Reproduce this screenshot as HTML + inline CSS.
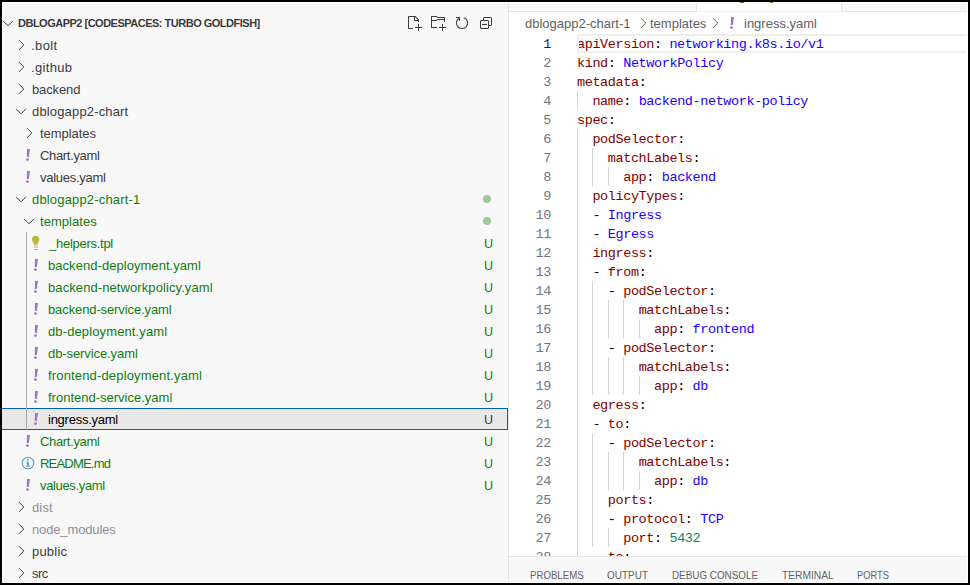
<!DOCTYPE html>
<html><head><meta charset="utf-8"><style>
html,body{margin:0;padding:0;}
body{width:970px;height:585px;overflow:hidden;background:#000;position:relative;font-family:"Liberation Sans",sans-serif;}
.a{position:absolute;}
.ic{position:absolute;overflow:visible;}
#win{position:absolute;left:2px;top:2px;width:966px;height:581px;background:#fff;}
#sb{position:absolute;left:2px;top:3px;width:506px;height:579px;background:#f8f8f8;overflow:hidden;}
.row{position:absolute;left:0;height:22px;width:506px;}
.t{position:absolute;font-size:13px;line-height:22px;white-space:pre;top:0;}
.sel{left:0;width:506px;background:#e8e8e8;border-top:1px solid #005fb8;border-bottom:1px solid #005fb8;border-right:1px solid #005fb8;box-sizing:border-box;}
.badge{position:absolute;left:482px;font-size:12.5px;line-height:22px;top:0;}
.dot{position:absolute;left:481px;top:7px;width:8px;height:8px;border-radius:50%;background:#9fc79c;}
.guide{position:absolute;width:1px;background:#a9a9a9;}
#ed{position:absolute;left:509px;top:3px;width:458px;height:579px;background:#fff;overflow:hidden;}
.ln{position:absolute;left:0;width:42px;text-align:right;font-family:"Liberation Mono",monospace;font-size:13.5px;line-height:19px;letter-spacing:-0.4px;color:#6e7681;white-space:pre;}
.cl{position:absolute;left:68px;font-family:"Liberation Mono",monospace;font-size:13.5px;line-height:19px;letter-spacing:-0.4px;color:#000;white-space:pre;}
.k{color:#800000}.v{color:#2200ff}.n{color:#098658}
.ig{position:absolute;width:1px;height:19px;background:#d3d3d3;}
</style></head><body>
<div id="win"></div>

<div id="sb"><div class="a" style="left:0;top:0;width:1px;height:579px;background:#fff"></div>
<svg class="ic" style="left:-2px;top:12px" width="16" height="16" viewBox="0 0 16 16"><path d="M3.1 5.9L8 10.8L12.9 5.9" fill="none" stroke="#3b3b3b" stroke-width="1"/></svg>
<div class="a" style="left:16px;top:9px;font-weight:bold;font-size:11px;line-height:22px;letter-spacing:-0.5px;color:#3b3b3b;white-space:pre">DBLOGAPP2 [CODESPACES: TURBO GOLDFISH]</div>
<div class="row" style="top:31px"><svg class="ic" style="left:11px;top:3px" width="16" height="16" viewBox="0 0 16 16"><path d="M5.9 3.1L10.8 8L5.9 12.9" fill="none" stroke="#3b3b3b" stroke-width="1"/></svg><div class="t" style="left:29px;color:#3b3b3b;top:1px;letter-spacing:0.40px">.bolt</div></div>
<div class="row" style="top:53px"><svg class="ic" style="left:11px;top:3px" width="16" height="16" viewBox="0 0 16 16"><path d="M5.9 3.1L10.8 8L5.9 12.9" fill="none" stroke="#3b3b3b" stroke-width="1"/></svg><div class="t" style="left:29px;color:#3b3b3b;top:1px;letter-spacing:0.33px">.github</div></div>
<div class="row" style="top:75px"><svg class="ic" style="left:11px;top:3px" width="16" height="16" viewBox="0 0 16 16"><path d="M5.9 3.1L10.8 8L5.9 12.9" fill="none" stroke="#3b3b3b" stroke-width="1"/></svg><div class="t" style="left:30px;color:#3b3b3b;top:1px;letter-spacing:-0.13px">backend</div></div>
<div class="row" style="top:97px"><svg class="ic" style="left:11px;top:3px" width="16" height="16" viewBox="0 0 16 16"><path d="M3.1 5.9L8 10.8L12.9 5.9" fill="none" stroke="#3b3b3b" stroke-width="1"/></svg><div class="t" style="left:30px;color:#3b3b3b;top:1px;letter-spacing:0.16px">dblogapp2-chart</div></div>
<div class="row" style="top:119px"><svg class="ic" style="left:19px;top:3px" width="16" height="16" viewBox="0 0 16 16"><path d="M5.9 3.1L10.8 8L5.9 12.9" fill="none" stroke="#3b3b3b" stroke-width="1"/></svg><div class="t" style="left:38px;color:#3b3b3b;top:1px;letter-spacing:-0.05px">templates</div></div>
<div class="row" style="top:141px"><svg class="ic" style="left:20px;top:3px" width="16" height="16" viewBox="0 0 16 16"><path d="M5 2H8L6.8 10H4.8Z" fill="#a074c4"/><circle cx="5.5" cy="12.6" r="1.45" fill="#a074c4"/></svg><div class="t" style="left:38px;color:#3b3b3b;top:1px;letter-spacing:-0.33px">Chart.yaml</div></div>
<div class="row" style="top:163px"><svg class="ic" style="left:20px;top:3px" width="16" height="16" viewBox="0 0 16 16"><path d="M5 2H8L6.8 10H4.8Z" fill="#a074c4"/><circle cx="5.5" cy="12.6" r="1.45" fill="#a074c4"/></svg><div class="t" style="left:38px;color:#3b3b3b;top:1px;letter-spacing:-0.28px">values.yaml</div></div>
<div class="row" style="top:185px"><svg class="ic" style="left:11px;top:3px" width="16" height="16" viewBox="0 0 16 16"><path d="M3.1 5.9L8 10.8L12.9 5.9" fill="none" stroke="#3b3b3b" stroke-width="1"/></svg><div class="t" style="left:30px;color:#107a10;top:1px;letter-spacing:0.17px">dblogapp2-chart-1</div><div class="dot" style="top:7px"></div></div>
<div class="row" style="top:207px"><svg class="ic" style="left:19px;top:3px" width="16" height="16" viewBox="0 0 16 16"><path d="M3.1 5.9L8 10.8L12.9 5.9" fill="none" stroke="#3b3b3b" stroke-width="1"/></svg><div class="t" style="left:38px;color:#107a10;top:1px;letter-spacing:0.05px">templates</div><div class="dot" style="top:7px"></div></div>
<div class="row" style="top:229px"><svg class="ic" style="left:28px;top:2px" width="12" height="18" viewBox="0 0 12 18"><path d="M5.6 1.8C3.5 1.8 2 3.3 2 5.3C2 7.2 3.3 8.3 3.6 9.5L3.8 10.8H7.6L7.8 9.5C8.1 8.3 9.3 7.2 9.3 5.3C9.3 3.3 7.7 1.8 5.6 1.8Z" fill="#b5b53f"/><rect x="4" y="11" width="3.7" height="1.8" fill="#deddb5"/><rect x="4" y="12.8" width="3.7" height="0.9" fill="#c2c277"/><rect x="4" y="15" width="3.7" height="1" fill="#b5b53f"/></svg><div class="t" style="left:47px;color:#107a10;top:1px;letter-spacing:-0.27px">_helpers.tpl</div><div class="badge" style="color:#107a10;top:1px">U</div></div>
<div class="row" style="top:251px"><svg class="ic" style="left:28px;top:3px" width="16" height="16" viewBox="0 0 16 16"><path d="M5 2H8L6.8 10H4.8Z" fill="#a074c4"/><circle cx="5.5" cy="12.6" r="1.45" fill="#a074c4"/></svg><div class="t" style="left:46px;color:#107a10;top:1px;letter-spacing:0.05px">backend-deployment.yaml</div><div class="badge" style="color:#107a10;top:1px">U</div></div>
<div class="row" style="top:273px"><svg class="ic" style="left:28px;top:3px" width="16" height="16" viewBox="0 0 16 16"><path d="M5 2H8L6.8 10H4.8Z" fill="#a074c4"/><circle cx="5.5" cy="12.6" r="1.45" fill="#a074c4"/></svg><div class="t" style="left:46px;color:#107a10;top:1px;letter-spacing:0.09px">backend-networkpolicy.yaml</div><div class="badge" style="color:#107a10;top:1px">U</div></div>
<div class="row" style="top:295px"><svg class="ic" style="left:28px;top:3px" width="16" height="16" viewBox="0 0 16 16"><path d="M5 2H8L6.8 10H4.8Z" fill="#a074c4"/><circle cx="5.5" cy="12.6" r="1.45" fill="#a074c4"/></svg><div class="t" style="left:46px;color:#107a10;top:1px;letter-spacing:-0.11px">backend-service.yaml</div><div class="badge" style="color:#107a10;top:1px">U</div></div>
<div class="row" style="top:317px"><svg class="ic" style="left:28px;top:3px" width="16" height="16" viewBox="0 0 16 16"><path d="M5 2H8L6.8 10H4.8Z" fill="#a074c4"/><circle cx="5.5" cy="12.6" r="1.45" fill="#a074c4"/></svg><div class="t" style="left:46px;color:#107a10;top:1px;letter-spacing:0.12px">db-deployment.yaml</div><div class="badge" style="color:#107a10;top:1px">U</div></div>
<div class="row" style="top:339px"><svg class="ic" style="left:28px;top:3px" width="16" height="16" viewBox="0 0 16 16"><path d="M5 2H8L6.8 10H4.8Z" fill="#a074c4"/><circle cx="5.5" cy="12.6" r="1.45" fill="#a074c4"/></svg><div class="t" style="left:46px;color:#107a10;top:1px;letter-spacing:-0.09px">db-service.yaml</div><div class="badge" style="color:#107a10;top:1px">U</div></div>
<div class="row" style="top:361px"><svg class="ic" style="left:28px;top:3px" width="16" height="16" viewBox="0 0 16 16"><path d="M5 2H8L6.8 10H4.8Z" fill="#a074c4"/><circle cx="5.5" cy="12.6" r="1.45" fill="#a074c4"/></svg><div class="t" style="left:46px;color:#107a10;top:1px;letter-spacing:0.16px">frontend-deployment.yaml</div><div class="badge" style="color:#107a10;top:1px">U</div></div>
<div class="row" style="top:383px"><svg class="ic" style="left:28px;top:3px" width="16" height="16" viewBox="0 0 16 16"><path d="M5 2H8L6.8 10H4.8Z" fill="#a074c4"/><circle cx="5.5" cy="12.6" r="1.45" fill="#a074c4"/></svg><div class="t" style="left:46px;color:#107a10;top:1px;letter-spacing:0.00px">frontend-service.yaml</div><div class="badge" style="color:#107a10;top:1px">U</div></div>
<div class="a sel" style="top:405px;height:22px"></div><div class="row" style="top:405px"><svg class="ic" style="left:28px;top:3px" width="16" height="16" viewBox="0 0 16 16"><path d="M5 2H8L6.8 10H4.8Z" fill="#a074c4"/><circle cx="5.5" cy="12.6" r="1.45" fill="#a074c4"/></svg><div class="t" style="left:46px;color:#000000;top:1px;letter-spacing:-0.25px">ingress.yaml</div><div class="badge" style="color:#3b3b3b;top:1px">U</div></div>
<div class="row" style="top:427px"><svg class="ic" style="left:20px;top:3px" width="16" height="16" viewBox="0 0 16 16"><path d="M5 2H8L6.8 10H4.8Z" fill="#a074c4"/><circle cx="5.5" cy="12.6" r="1.45" fill="#a074c4"/></svg><div class="t" style="left:38px;color:#107a10;top:1px;letter-spacing:-0.33px">Chart.yaml</div><div class="badge" style="color:#107a10;top:1px">U</div></div>
<div class="row" style="top:449px"><svg class="ic" style="left:18px;top:3px" width="16" height="16" viewBox="0 0 16 16"><circle cx="8" cy="8" r="5.8" fill="none" stroke="#519aba" stroke-width="1.1"/><circle cx="7.9" cy="5.05" r="1" fill="#519aba"/><path d="M6 6.9H8.8V10.8H9.9V11.8H6V10.8H7V7.8H6Z" fill="#519aba"/></svg><div class="t" style="left:38px;color:#107a10;top:1px;letter-spacing:-0.80px">README.md</div><div class="badge" style="color:#107a10;top:1px">U</div></div>
<div class="row" style="top:471px"><svg class="ic" style="left:20px;top:3px" width="16" height="16" viewBox="0 0 16 16"><path d="M5 2H8L6.8 10H4.8Z" fill="#a074c4"/><circle cx="5.5" cy="12.6" r="1.45" fill="#a074c4"/></svg><div class="t" style="left:38px;color:#107a10;top:1px;letter-spacing:-0.35px">values.yaml</div><div class="badge" style="color:#107a10;top:1px">U</div></div>
<div class="row" style="top:493px"><svg class="ic" style="left:11px;top:3px" width="16" height="16" viewBox="0 0 16 16"><path d="M5.9 3.1L10.8 8L5.9 12.9" fill="none" stroke="#3b3b3b" stroke-width="1"/></svg><div class="t" style="left:30px;color:#8e8e90;top:1px;letter-spacing:0.13px">dist</div></div>
<div class="row" style="top:515px"><svg class="ic" style="left:11px;top:3px" width="16" height="16" viewBox="0 0 16 16"><path d="M5.9 3.1L10.8 8L5.9 12.9" fill="none" stroke="#3b3b3b" stroke-width="1"/></svg><div class="t" style="left:30px;color:#8e8e90;top:1px;letter-spacing:-0.14px">node_modules</div></div>
<div class="row" style="top:537px"><svg class="ic" style="left:11px;top:3px" width="16" height="16" viewBox="0 0 16 16"><path d="M5.9 3.1L10.8 8L5.9 12.9" fill="none" stroke="#3b3b3b" stroke-width="1"/></svg><div class="t" style="left:30px;color:#3b3b3b;top:1px;letter-spacing:0.20px">public</div></div>
<div class="row" style="top:559px"><svg class="ic" style="left:11px;top:3px" width="16" height="16" viewBox="0 0 16 16"><path d="M5.9 3.1L10.8 8L5.9 12.9" fill="none" stroke="#3b3b3b" stroke-width="1"/></svg><div class="t" style="left:30px;color:#3b3b3b;top:1px;letter-spacing:-0.55px">src</div></div>
<div class="guide" style="left:24px;top:229px;height:198px"></div>

<svg class="ic" style="left:404px;top:12px" width="16" height="16" viewBox="0 0 16 16"><path d="M9.5 1.1l3.4 3.5.1.4v2h-1V6H8.5L8 5.5V2H3v11h4v1H2.5l-.5-.5v-12l.5-.5h6.7l.3.1zM9 2v3h2.9L9 2zm4 14h-1v-3H9v-1h3V9h1v3h3v1h-3v3z" fill="#3b3b3b"/></svg>
<svg class="ic" style="left:428px;top:12px" width="16" height="16" viewBox="0 0 16 16"><path d="M14.5 2H7.71l-.85-.85L6.51 1h-5l-.5.5v11l.5.5H7v-1H1.99V6h4.49l.35-.15.86-.86H14v1.5l-.001.51h1.011V2.5L14.5 2zm-.51 2h-6.5l-.35.15-.86.86H2v-3h4.29l.85.85.36.15H14l-.01.99zM13 16h-1v-3H9v-1h3V9h1v3h3v1h-3v3z" fill="#3b3b3b"/></svg>
<svg class="ic" style="left:452px;top:12px" width="16" height="16" viewBox="0 0 16 16"><path d="M5.563 2.516A6.001 6.001 0 008 14 6 6 0 009.832 2.285l-.302.953A5.002 5.002 0 018 13a5 5 0 01-2.88-9.088l.443-1.396z" fill="#3b3b3b"/><path d="M5 3H2V2h3.5l.5.5V6H5V3z" fill="#3b3b3b"/></svg>
<svg class="ic" style="left:476px;top:12px" width="16" height="16" viewBox="0 0 16 16"><path d="M9 9H4v1h5V9z" fill="#3b3b3b"/><path fill-rule="evenodd" clip-rule="evenodd" d="M5 3l1-1h7l1 1v7l-1 1h-2v2l-1 1H3l-1-1V6l1-1h2V3zm1 2h4l1 1v4h2V3H6v2zm4 1H3v7h7V6z" fill="#3b3b3b"/></svg>
</div>
<div class="a" style="left:508px;top:3px;width:1px;height:579px;background:#e5e5e5"></div>
<div id="ed"><div class="a" style="left:0;top:0;width:458px;height:8px;background:#f8f8f8;border-bottom:1px solid #e5e5e5"></div>
<div class="a" style="left:187px;top:0;width:144px;height:9px;background:#fff;border-left:1px solid #e5e5e5;border-right:1px solid #e5e5e5"></div>
<div class="a" style="left:188px;top:8px;width:144px;height:1px;background:#f4f4f4"></div>
<div class="a" style="left:16px;top:10px;font-size:13px;line-height:22px;color:#616161;white-space:pre">dblogapp2-chart-1</div>
<svg class="ic" style="left:126px;top:12px" width="16" height="16" viewBox="0 0 16 16"><path d="M5.9 3.1L10.8 8L5.9 12.9" fill="none" stroke="#616161" stroke-width="1"/></svg>
<div class="a" style="left:141px;top:10px;font-size:13px;line-height:22px;color:#616161;white-space:pre">templates</div>
<svg class="ic" style="left:198px;top:12px" width="16" height="16" viewBox="0 0 16 16"><path d="M5.9 3.1L10.8 8L5.9 12.9" fill="none" stroke="#616161" stroke-width="1"/></svg>
<svg class="ic" style="left:217px;top:12px" width="16" height="16" viewBox="0 0 16 16"><path d="M5 2H8L6.8 10H4.8Z" fill="#a074c4"/><circle cx="5.5" cy="12.6" r="1.45" fill="#a074c4"/></svg>
<div class="a" style="left:235px;top:10px;font-size:13px;line-height:22px;color:#616161;white-space:pre">ingress.yaml</div>
<div class="ln" style="top:32px;color:#171184">1</div>
<div class="cl" style="top:32px"><span class="k">apiVersion</span>: <span class="v">networking.k8s.io/v1</span></div>
<div class="ln" style="top:51px;color:#6e7681">2</div>
<div class="cl" style="top:51px"><span class="k">kind</span>: <span class="v">NetworkPolicy</span></div>
<div class="ln" style="top:70px;color:#6e7681">3</div>
<div class="cl" style="top:70px"><span class="k">metadata</span>:</div>
<div class="ln" style="top:89px;color:#6e7681">4</div>
<div class="ig" style="left:68px;top:88px"></div>
<div class="cl" style="top:89px">  <span class="k">name</span>: <span class="v">backend-network-policy</span></div>
<div class="ln" style="top:108px;color:#6e7681">5</div>
<div class="cl" style="top:108px"><span class="k">spec</span>:</div>
<div class="ln" style="top:127px;color:#6e7681">6</div>
<div class="ig" style="left:68px;top:126px"></div>
<div class="cl" style="top:127px">  <span class="k">podSelector</span>:</div>
<div class="ln" style="top:146px;color:#6e7681">7</div>
<div class="ig" style="left:68px;top:145px"></div>
<div class="ig" style="left:83px;top:145px"></div>
<div class="cl" style="top:146px">    <span class="k">matchLabels</span>:</div>
<div class="ln" style="top:165px;color:#6e7681">8</div>
<div class="ig" style="left:68px;top:164px"></div>
<div class="ig" style="left:83px;top:164px"></div>
<div class="ig" style="left:99px;top:164px"></div>
<div class="cl" style="top:165px">      <span class="k">app</span>: <span class="v">backend</span></div>
<div class="ln" style="top:184px;color:#6e7681">9</div>
<div class="ig" style="left:68px;top:183px"></div>
<div class="cl" style="top:184px">  <span class="k">policyTypes</span>:</div>
<div class="ln" style="top:203px;color:#6e7681">10</div>
<div class="ig" style="left:68px;top:202px"></div>
<div class="cl" style="top:203px">  - <span class="v">Ingress</span></div>
<div class="ln" style="top:222px;color:#6e7681">11</div>
<div class="ig" style="left:68px;top:221px"></div>
<div class="cl" style="top:222px">  - <span class="v">Egress</span></div>
<div class="ln" style="top:241px;color:#6e7681">12</div>
<div class="ig" style="left:68px;top:240px"></div>
<div class="cl" style="top:241px">  <span class="k">ingress</span>:</div>
<div class="ln" style="top:260px;color:#6e7681">13</div>
<div class="ig" style="left:68px;top:259px"></div>
<div class="cl" style="top:260px">  - <span class="k">from</span>:</div>
<div class="ln" style="top:279px;color:#6e7681">14</div>
<div class="ig" style="left:68px;top:278px"></div>
<div class="ig" style="left:83px;top:278px"></div>
<div class="cl" style="top:279px">    - <span class="k">podSelector</span>:</div>
<div class="ln" style="top:298px;color:#6e7681">15</div>
<div class="ig" style="left:68px;top:297px"></div>
<div class="ig" style="left:83px;top:297px"></div>
<div class="ig" style="left:99px;top:297px"></div>
<div class="ig" style="left:114px;top:297px"></div>
<div class="cl" style="top:298px">        <span class="k">matchLabels</span>:</div>
<div class="ln" style="top:317px;color:#6e7681">16</div>
<div class="ig" style="left:68px;top:316px"></div>
<div class="ig" style="left:83px;top:316px"></div>
<div class="ig" style="left:99px;top:316px"></div>
<div class="ig" style="left:114px;top:316px"></div>
<div class="ig" style="left:130px;top:316px"></div>
<div class="cl" style="top:317px">          <span class="k">app</span>: <span class="v">frontend</span></div>
<div class="ln" style="top:336px;color:#6e7681">17</div>
<div class="ig" style="left:68px;top:335px"></div>
<div class="ig" style="left:83px;top:335px"></div>
<div class="cl" style="top:336px">    - <span class="k">podSelector</span>:</div>
<div class="ln" style="top:355px;color:#6e7681">18</div>
<div class="ig" style="left:68px;top:354px"></div>
<div class="ig" style="left:83px;top:354px"></div>
<div class="ig" style="left:99px;top:354px"></div>
<div class="ig" style="left:114px;top:354px"></div>
<div class="cl" style="top:355px">        <span class="k">matchLabels</span>:</div>
<div class="ln" style="top:374px;color:#6e7681">19</div>
<div class="ig" style="left:68px;top:373px"></div>
<div class="ig" style="left:83px;top:373px"></div>
<div class="ig" style="left:99px;top:373px"></div>
<div class="ig" style="left:114px;top:373px"></div>
<div class="ig" style="left:130px;top:373px"></div>
<div class="cl" style="top:374px">          <span class="k">app</span>: <span class="v">db</span></div>
<div class="ln" style="top:393px;color:#6e7681">20</div>
<div class="ig" style="left:68px;top:392px"></div>
<div class="cl" style="top:393px">  <span class="k">egress</span>:</div>
<div class="ln" style="top:412px;color:#6e7681">21</div>
<div class="ig" style="left:68px;top:411px"></div>
<div class="cl" style="top:412px">  - <span class="k">to</span>:</div>
<div class="ln" style="top:431px;color:#6e7681">22</div>
<div class="ig" style="left:68px;top:430px"></div>
<div class="ig" style="left:83px;top:430px"></div>
<div class="cl" style="top:431px">    - <span class="k">podSelector</span>:</div>
<div class="ln" style="top:450px;color:#6e7681">23</div>
<div class="ig" style="left:68px;top:449px"></div>
<div class="ig" style="left:83px;top:449px"></div>
<div class="ig" style="left:99px;top:449px"></div>
<div class="ig" style="left:114px;top:449px"></div>
<div class="cl" style="top:450px">        <span class="k">matchLabels</span>:</div>
<div class="ln" style="top:469px;color:#6e7681">24</div>
<div class="ig" style="left:68px;top:468px"></div>
<div class="ig" style="left:83px;top:468px"></div>
<div class="ig" style="left:99px;top:468px"></div>
<div class="ig" style="left:114px;top:468px"></div>
<div class="ig" style="left:130px;top:468px"></div>
<div class="cl" style="top:469px">          <span class="k">app</span>: <span class="v">db</span></div>
<div class="ln" style="top:488px;color:#6e7681">25</div>
<div class="ig" style="left:68px;top:487px"></div>
<div class="ig" style="left:83px;top:487px"></div>
<div class="cl" style="top:488px">    <span class="k">ports</span>:</div>
<div class="ln" style="top:507px;color:#6e7681">26</div>
<div class="ig" style="left:68px;top:506px"></div>
<div class="ig" style="left:83px;top:506px"></div>
<div class="cl" style="top:507px">    - <span class="k">protocol</span>: <span class="v">TCP</span></div>
<div class="ln" style="top:526px;color:#6e7681">27</div>
<div class="ig" style="left:68px;top:525px"></div>
<div class="ig" style="left:83px;top:525px"></div>
<div class="ig" style="left:99px;top:525px"></div>
<div class="cl" style="top:526px">      <span class="k">port</span>: <span class="n">5432</span></div>
<div class="ln" style="top:545px;color:#6e7681">28</div>
<div class="ig" style="left:68px;top:544px"></div>
<div class="cl" style="top:545px">    <span class="k">to</span>:</div>
<div class="a" style="left:68px;top:31px;width:388px;height:15px;border-top:2px solid #eeeeee;border-bottom:2px solid #eeeeee;border-left:2px solid #eeeeee"></div>
<div class="a" style="left:0;top:553px;width:458px;height:25px;background:#f8f8f8;border-top:1px solid #e5e5e5"></div>
<div class="a" style="left:20.5px;top:565px;font-size:11px;line-height:14px;color:#616161;white-space:pre;transform:scaleX(0.877);transform-origin:0 0">PROBLEMS</div>
<div class="a" style="left:98.0px;top:565px;font-size:11px;line-height:14px;color:#616161;white-space:pre;transform:scaleX(0.906);transform-origin:0 0">OUTPUT</div>
<div class="a" style="left:163.0px;top:565px;font-size:11px;line-height:14px;color:#616161;white-space:pre;transform:scaleX(0.896);transform-origin:0 0">DEBUG CONSOLE</div>
<div class="a" style="left:272.5px;top:565px;font-size:11px;line-height:14px;color:#616161;white-space:pre;transform:scaleX(0.929);transform-origin:0 0">TERMINAL</div>
<div class="a" style="left:348.0px;top:565px;font-size:11px;line-height:14px;color:#616161;white-space:pre;transform:scaleX(0.849);transform-origin:0 0">PORTS</div></div>
<div class="a" style="left:740px;top:2px;width:4px;height:1px;background:#3f7a2a"></div><div class="a" style="left:770px;top:2px;width:3px;height:1px;background:#3f7a2a"></div>
</body></html>
